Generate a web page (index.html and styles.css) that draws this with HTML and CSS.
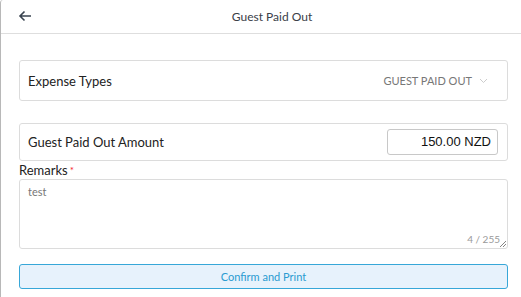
FILE: index.html
```html
<!DOCTYPE html>
<html>
<head>
<meta charset="utf-8">
<link rel="stylesheet" href="styles.css">
</head>
<body>
<div class="page">
  <header class="header">
    <span class="back">
      <svg width="14" height="12" viewBox="0 0 14 12"><path d="M13 6H2M6.5 1.5L2 6l4.5 4.5" fill="none" stroke="#3a4450" stroke-width="1.6"/></svg>
    </span>
    <div class="title">Guest Paid Out</div>
  </header>
  <main class="content">
    <div class="box select-box">
      <span class="label">Expense Types</span>
      <span class="select-value">GUEST PAID OUT
        <svg class="chev" width="9" height="6" viewBox="0 0 9 6"><path d="M1 1l3.5 3.5L8 1" fill="none" stroke="#ccc" stroke-width="1"/></svg>
      </span>
    </div>
    <div class="box amount-box">
      <span class="label">Guest Paid Out Amount</span>
      <div class="amount-input">150.00 NZD</div>
    </div>
    <div class="remarks-label">Remarks<span class="req">*</span></div>
    <div class="textarea">
      <span class="ta-text">test</span>
      <span class="counter">4 / 255</span>
      <svg class="grip" width="8" height="8" viewBox="0 0 8 8"><path d="M7 1L1 7M7 4L4 7" stroke="#777" stroke-width="0.9"/></svg>
    </div>
    <button class="confirm">Confirm and Print</button>
  </main>
</div>
</body>
</html>
```

FILE: styles.css
```css
* { box-sizing: border-box; }
html, body { margin: 0; padding: 0; background: #fff; }
body { font-family: Lato, "Open Sans", sans-serif; color: #333; }
.page {
  width: 521px;
  height: 297px;
  border-left: 1px solid #b8b8b8;
  border-top-left-radius: 3px;
  overflow: hidden;
}
.header {
  height: 34px;
  border-bottom: 1px solid #dedede;
  display: flex;
  align-items: center;
  position: relative;
}
.back {
  position: absolute;
  left: 17px;
  top: 10px;
  display: flex;
}
.title {
  flex: 1;
  text-align: center;
  padding-left: 22px;
  font-size: 12px;
  color: #3a4048;
  padding-bottom: 1px;
}
.content {
  padding: 26px 13px 0 18px;
}
.box {
  border: 1px solid #dcdcdc;
  border-radius: 3px;
  display: flex;
  align-items: center;
  justify-content: space-between;
}
.label { font-size: 13px; color: #222; }
.select-box {
  height: 41px;
  padding: 0 19px 0 8px;
}
.select-value {
  font-size: 11px;
  color: #777;
  display: flex;
  align-items: center;
  gap: 7px;
}
.chev { margin-top: 1px; }
.amount-box {
  margin-top: 22px;
  height: 38px;
  padding: 0 9px 0 8px;
}
.amount-input {
  width: 111px;
  height: 26px;
  border: 1px solid #c8c8c8;
  border-radius: 3px;
  font-family: "Liberation Sans", Arial, sans-serif;
  font-size: 13px;
  color: #111;
  text-align: right;
  padding: 4px 6px 0 0;
}
.remarks-label {
  font-size: 13px;
  color: #222;
  margin-top: 1px;
  height: 16px;
  line-height: 16px;
}
.req { color: #f5222d; font-size: 10px; vertical-align: top; margin-left: 2px; }
.textarea {
  position: relative;
  margin-top: 1px;
  height: 70px;
  border: 1px solid #dcdcdc;
  border-radius: 3px;
}
.ta-text {
  position: absolute;
  left: 8px;
  top: 5px;
  font-size: 11px;
  color: #777;
}
.counter {
  position: absolute;
  right: 7px;
  bottom: 3px;
  font-size: 10px;
  color: #999;
}
.grip { position: absolute; right: 0; bottom: 0; }
.confirm {
  display: block;
  width: 100%;
  margin-top: 15px;
  height: 25px;
  border: 1px solid #37a7d8;
  border-radius: 3px;
  background: #e7f2fc;
  color: #2a9bd1;
  font-family: Lato, sans-serif;
  font-size: 11px;
  padding: 0;
}
```
